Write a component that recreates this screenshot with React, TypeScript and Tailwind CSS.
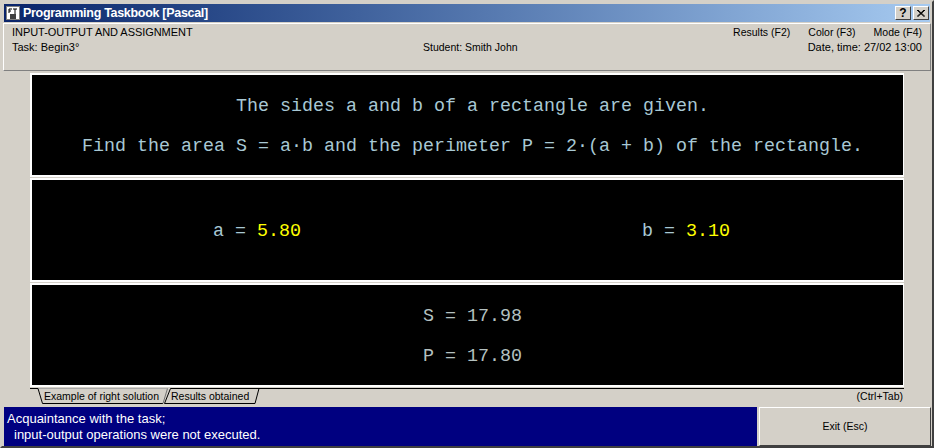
const sans = "font-['Liberation_Sans',Arial,sans-serif]";
const mono = "font-['Liberation_Mono','Courier_New',monospace]";

function CaptionButton({ children }: { children: React.ReactNode }) {
  return (
    <div className="flex h-[14px] w-[16px] items-center justify-center border border-t-white border-l-white border-r-[#404040] border-b-[#404040] bg-[#d4d0c8] text-[12px] leading-none font-bold text-black">
      {children}
    </div>
  );
}

function Panel({ className, children }: { className: string; children: React.ReactNode }) {
  return (
    <div className={`h-[104px] bg-black border-t-2 border-b-2 border-l-2 border-r border-white text-[18.33px] leading-[20px] ${mono} ${className}`}>
      {children}
    </div>
  );
}

function Tabs() {
  // the tab strip is a drawn outline: slanted sides cut into the line under the panels
  return (
    <svg width="874" height="17" viewBox="0 0 874 17" className="absolute left-0 top-0">
      <path d="M8 0.500H137.500" stroke="#a8a8a8" fill="none" />
      <path d="M0 0.500H8L12.500 15.500H133" stroke="#000" fill="none" />
      <path d="M133 15.500L137.500 0.500" stroke="#707070" fill="none" />
      <path d="M134.500 15.500L140.500 0.500H874" stroke="#000" fill="none" />
      <path d="M134.500 15.500H225L229 0.500" stroke="#000" fill="none" />
    </svg>
  );
}

export default function App() {
  return (
    <div className={`flex h-[448px] w-[934px] flex-col overflow-hidden border-2 border-t-[#d4d0c8] border-l-[#d4d0c8] border-r-[#404040] border-b-[#404040] bg-[#d4d0c8] text-[10.500px] leading-[15px] text-black ${sans}`}>
      <div className="mx-[2px] mt-[2px] flex h-[18px] items-center justify-between bg-gradient-to-r from-[#0a246a] to-[#a6caf0] pl-[2px] pr-[1px]">
        <div className="flex items-center gap-[3px]">
          <svg width="14" height="14" viewBox="0 0 14 14">
            <rect x="0.5" y="0.5" width="13" height="13" fill="#fff" stroke="#808080" />
            <path d="M3 3h3M3 3v4M3 5h2M7 3h4M9 3v5" stroke="#000" fill="none" />
            <rect x="4" y="8" width="6" height="5" fill="#404040" />
          </svg>
          <span className="text-[12.500px] font-bold tracking-[-0.3px] text-white">Programming Taskbook [Pascal]</span>
        </div>
        <div className="flex gap-[2px]">
          <CaptionButton>?</CaptionButton>
          <CaptionButton>
            <svg width="8" height="7" viewBox="0 0 8 7"><path d="M0 0l7 6.500M1 0l7 6.500M7 0l-7 6.500M8 0l-7 6.500" stroke="#000" /></svg>
          </CaptionButton>
        </div>
      </div>

      <div className="mx-[1px] mt-[1px] flex h-[48px] flex-col border border-t-white border-l-white border-r-[#808080] border-b-[#808080] px-[8px] pt-[1px]">
        <div className="flex justify-between">
          <span className="text-[11px] tracking-[-0.05px]">INPUT-OUTPUT AND ASSIGNMENT</span>
          <div className="flex gap-[18px]">
            <span>Results (F2)</span>
            <span>Color (F3)</span>
            <span>Mode (F4)</span>
          </div>
        </div>
        <div className="flex">
          <span className="w-[411px] text-[11px]">Task: Begin3°</span>
          <span>Student: Smith John</span>
          <span className="flex-1 text-right text-[11px]">Date, time: 27/02 13:00</span>
        </div>
      </div>

      <div className="mx-[28px] mt-[2px] flex flex-col gap-[1px]">
        <Panel className="pl-[10px] pt-[22px] text-center text-[#a8c8d4]">
          <div className="whitespace-pre">The sides a and b of a rectangle are given.</div>
          <div className="mt-[20px] whitespace-pre">Find the area S = a·b and the perimeter P = 2·(a + b) of the rectangle.</div>
        </Panel>
        <Panel className="flex items-center pt-[3px] text-[#a8c8d4]">
          <div className="ml-[181px] whitespace-pre">a = <span className="text-[#ffff00]">5.80</span></div>
          <div className="ml-[341px] whitespace-pre">b = <span className="text-[#ffff00]">3.10</span></div>
        </Panel>
        <Panel className="pl-[10px] pt-[22px] text-center text-[#b4c0c0]">
          <div className="whitespace-pre">S = 17.98</div>
          <div className="mt-[20px] whitespace-pre">P = 17.80</div>
        </Panel>
      </div>

      <div className="relative mx-[28px] mt-[1px] flex h-[19px] items-start justify-between pt-[1px]">
        <Tabs />
        <div className="relative flex pl-[14px]">
          <span className="w-[127px]">Example of right solution</span>
          <span>Results obtained</span>
        </div>
        <span className="relative pr-[1px]">(Ctrl+Tab)</span>
      </div>

      <div className="flex h-[39px] gap-[2px] pl-[2px] pr-[1px]">
        <div className="w-[753px] bg-[#000080] pl-[3px] pt-[4px] text-[13px] leading-[16px] text-white">
          <div>Acquaintance with the task;</div>
          <div className="whitespace-pre pl-[7px]">input-output operations were not executed.</div>
        </div>
        <div className="flex flex-1 items-center justify-center border border-t-white border-l-white border-r-[#404040] border-b-[#404040]">
          Exit (Esc)
        </div>
      </div>
    </div>
  );
}
